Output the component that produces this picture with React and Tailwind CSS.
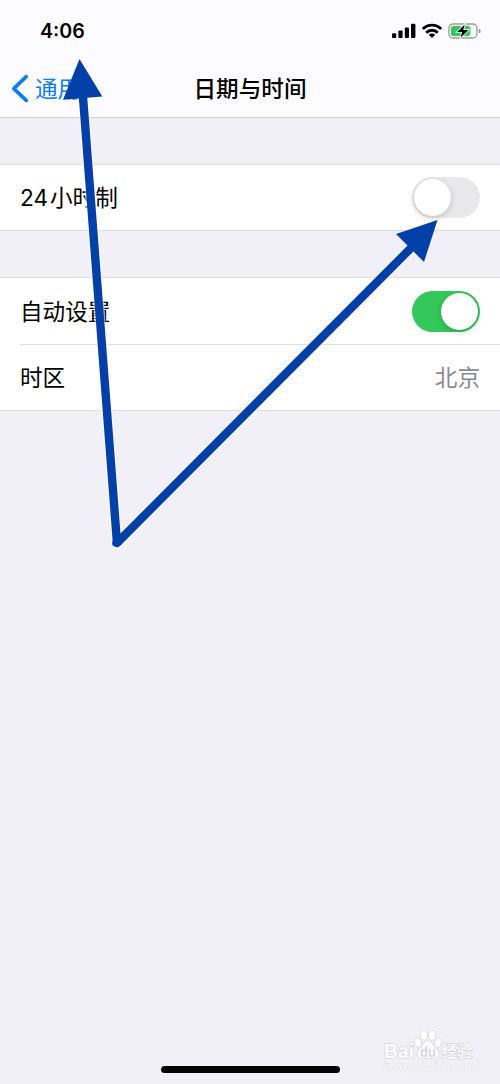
function Toggle({ on }) {
  return (
    <div
      className={
        on
          ? "flex h-[41px] w-[68px] items-center justify-end rounded-full bg-[#34c759] p-[2px]"
          : "flex h-[41px] w-[68px] items-center justify-start rounded-full bg-[#e9e9eb] p-[2px]"
      }
    >
      <div className="size-[37px] rounded-full bg-white shadow-[0_2px_6px_rgba(0,0,0,0.18)]" />
    </div>
  );
}

function StatusBar() {
  return (
    <div className="flex h-[60px] items-center justify-between pl-10 pr-[19px] pt-[2px]">
      <span className="pt-[2px] font-['Inter'] text-[19.6px] font-semibold leading-none">4:06</span>
      <div className="flex items-center">
        <svg width="24" height="16" viewBox="0 0 24 16">
          <rect x="0" y="10.2" width="4.2" height="4.8" rx="1" />
          <rect x="6.4" y="7.6" width="4.2" height="7.4" rx="1" />
          <rect x="12.8" y="4.4" width="4.2" height="10.6" rx="1" />
          <rect x="19" y="0.8" width="4.4" height="14.2" rx="1" />
        </svg>
        <svg className="ml-[6px]" width="20" height="16" viewBox="0 0 20 16" fill="none" stroke="#000" strokeWidth="2.8">
          <path d="M0.9 6.1C6 0.9 14 0.9 19.1 6.1" />
          <path d="M4.2 9.7C7.5 6.4 12.5 6.4 15.8 9.7" />
          <path d="M10 14.9 6.8 11.8Q10 9.1 13.2 11.8Z" fill="#000" stroke="none" />
        </svg>
        <svg className="ml-[6px]" width="33" height="18" viewBox="0 0 33 18">
          <rect x="0.9" y="2" width="28" height="14" rx="4.3" fill="none" stroke="#9b9b9e" strokeWidth="1.3" />
          <path d="M30.6 6.4Q32.7 7 32.7 9T30.6 11.6Z" fill="#9b9b9e" />
          <rect x="2.9" y="4" width="19.5" height="10" rx="2.5" fill="#34c759" />
          <path d="M16.7 2.4 9 10h5.1L12.5 15.7 20.4 8h-5.2Z" fill="#000" stroke="#fcfcfe" strokeWidth="1.6" paintOrder="stroke" />
        </svg>
      </div>
    </div>
  );
}

function Watermark() {
  return (
    <svg className="absolute left-[382px] top-[1026px]" width="96" height="48" viewBox="0 0 96 48" fill="#fff" stroke="#d6d6db" strokeWidth="1.5" paintOrder="stroke" strokeLinejoin="round">
      <text x="2" y="31.5" fontFamily="Liberation Sans, sans-serif" fontSize="20" fontWeight="bold" textLength="30" lengthAdjust="spacingAndGlyphs">Bai</text>
      <ellipse cx="36" cy="16.5" rx="3" ry="4.4" transform="rotate(-18 36 16.5)" />
      <ellipse cx="42" cy="9" rx="3.3" ry="4.7" />
      <ellipse cx="50.1" cy="9.3" rx="3.3" ry="4.7" transform="rotate(8 50.1 9.3)" />
      <ellipse cx="55.8" cy="17" rx="3" ry="4.4" transform="rotate(18 55.8 17)" />
      <path d="M45.8 15.5C41.8 15.5 41 20.5 37.3 23.2C34.5 25.4 34.5 32 39.4 32.4C42 32.6 44 31.8 46 31.8C48 31.8 50 32.6 52.6 32.4C57.5 32 57.3 25.6 54.4 23.2C51 20.5 49.8 15.5 45.8 15.5Z" />
      <text x="38" y="30.5" fontFamily="Liberation Sans, sans-serif" fontSize="14" fontWeight="bold" fill="#d6d6db" stroke="none" textLength="16" lengthAdjust="spacingAndGlyphs">du</text>
      <text x="59.5" y="31" fontFamily="Noto Sans CJK SC, sans-serif" fontSize="15.5" fontWeight="500" textLength="31">经验</text>
      <text x="2" y="44" fontFamily="Liberation Sans, sans-serif" fontSize="11" fill="#f8f8fb" stroke="#e5e5e9" strokeWidth="1" textLength="90" lengthAdjust="spacingAndGlyphs">jingyan.baidu.com</text>
    </svg>
  );
}

function Arrows() {
  return (
    <svg className="pointer-events-none absolute inset-0" width="500" height="1084" viewBox="0 0 500 1084" fill="none">
      <g stroke="#fff" strokeOpacity="0.55" strokeWidth="11" strokeLinejoin="round">
        <path d="M83 98 117 543 410 249" />
      </g>
      <path d="M83 97 117 543 412 247" stroke="#0240a8" strokeWidth="8.4" strokeLinejoin="round" />
      <path d="M112 541.5 121 541 121.5 544.5 117.5 547 112.5 545.5Z" fill="#0240a8" />
      <path d="M79.5 59 102.3 96.5 63 99.8ZM437.5 220 424 262 396 234Z" fill="#0240a8" />
    </svg>
  );
}

export default function App() {
  return (
    <div className="relative flex h-[1084px] w-[500px] flex-col overflow-hidden bg-[#f1f0f6] font-['Inter','Noto_Sans_CJK_SC',sans-serif] text-[22.6px] leading-none text-black">
      <header className="h-[118px] border-b border-[#d0d0d4] bg-[#fcfcfe]">
        <StatusBar />
        <div className="grid h-[57px] grid-cols-[1fr_auto_1fr] items-center">
          <div className="flex items-center pl-[11px] text-[#0a7aff]">
            <svg width="18" height="30" viewBox="0 0 18 30" fill="none" stroke="currentColor" strokeWidth="3.6" strokeLinecap="round" strokeLinejoin="round">
              <path d="M15.2 2.6 2.8 14.6 15.2 26.4" />
            </svg>
            <span className="ml-[6px] pt-[2px]">通用</span>
          </div>
          <h1 className="pt-[2px] font-medium">日期与时间</h1>
        </div>
      </header>
      <section className="mt-[46px] flex h-[67px] items-center justify-between border-y border-[#dedee2] bg-white px-5">
        <span className="pt-[2px]">24<span className="ml-[2px]">小时制</span></span>
        <Toggle on={false} />
      </section>
      <section className="mt-[46px] h-[134px] border-y border-[#dedee2] bg-white pl-5">
        <div className="flex h-[67px] items-center justify-between border-b border-[#dedee2] pr-5">
          <span className="pt-[3px]">自动设置</span>
          <Toggle on />
        </div>
        <div className="flex h-[65px] items-center justify-between pr-5 pt-[2px]">
          <span>时区</span>
          <span className="text-[#8a8a8e]">北京</span>
        </div>
      </section>
      <div className="mx-auto mb-[11px] mt-auto h-[7px] w-[179px] rounded-full bg-black" />
      <Watermark />
      <Arrows />
    </div>
  );
}
